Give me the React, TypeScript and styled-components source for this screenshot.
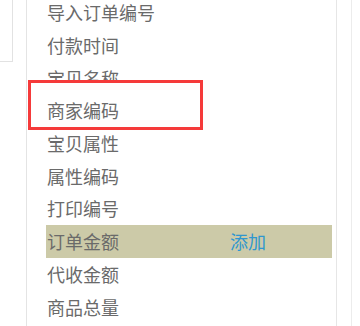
import React from "react";
import styled, { createGlobalStyle } from "styled-components";

const GlobalStyle = createGlobalStyle`
  html, body {
    margin: 0;
    padding: 0;
    background: #ffffff;
  }
  body {
    font-family: "Liberation Sans", "Noto Sans CJK SC", sans-serif;
  }
`;

const Page = styled.div`
  width: 360px;
  height: 326px;
  display: flex;
  overflow: hidden;
  background: #ffffff;
`;

const Gutter = styled.div`
  width: 26px;
  flex-shrink: 0;
`;

const Stub = styled.div`
  width: 12px;
  height: 62px;
  border-right: 1px solid #e2e2e2;
  border-bottom: 1px solid #e2e2e2;
  box-sizing: border-box;
  width: 13px;
`;

const ListPanel = styled.div`
  width: 311px;
  flex-shrink: 0;
  box-sizing: border-box;
  border-left: 1px solid #e4e4e4;
  border-right: 1px solid #e6e6e6;
  padding: 0 4px 0 19px;
`;

const FieldList = styled.ul`
  list-style: none;
  margin: -4px 0 0;
  padding: 0;
`;

const Row = styled.li<{ $active?: boolean; $marked?: boolean }>`
  height: 32.7px;
  display: grid;
  grid-template-columns: 183px 1fr;
  align-items: center;
  padding-left: 1px;
  font-family: "Noto Sans CJK SC", "Liberation Sans", sans-serif;
  font-size: 18px;
  color: #6a6a6a;
  background: ${({ $active }) => ($active ? "#cccaa8" : "transparent")};
  position: ${({ $marked }) => ($marked ? "relative" : "static")};
  z-index: ${({ $marked }) => ($marked ? 1 : "auto")};

  ${({ $marked }) =>
    $marked &&
    `
    &::before {
      content: "";
      position: absolute;
      left: -18px;
      top: -14px;
      width: 175px;
      height: 50px;
      box-sizing: border-box;
      border: 3px solid #f53a3a;
      background: #ffffff;
      z-index: -1;
    }
  `}
`;

const Label = styled.span`
  white-space: nowrap;
`;

const Action = styled.span`
  color: #2f97cf;
  font-size: 18px;
`;

const ScrollGap = styled.div`
  width: 14px;
  flex-shrink: 0;
`;

const ScrollTrack = styled.div`
  width: 8px;
  flex-shrink: 0;
  border-left: 1px solid #ececec;
`;

const fields = [
  "导入订单编号",
  "付款时间",
  "宝贝名称",
  "商家编码",
  "宝贝属性",
  "属性编码",
  "打印编号",
  "订单金额",
  "代收金额",
  "商品总量",
];

const App: React.FC = () => {
  const active = "订单金额";
  const marked = "商家编码";
  return (
    <>
      <GlobalStyle />
      <Page>
        <Gutter>
          <Stub />
        </Gutter>
        <ListPanel>
          <FieldList>
            {fields.map((name) => (
              <Row key={name} $active={name === active} $marked={name === marked}>
                <Label>{name}</Label>
                {name === active && <Action>添加</Action>}
              </Row>
            ))}
          </FieldList>
        </ListPanel>
        <ScrollGap />
        <ScrollTrack />
      </Page>
    </>
  );
};

export default App;
